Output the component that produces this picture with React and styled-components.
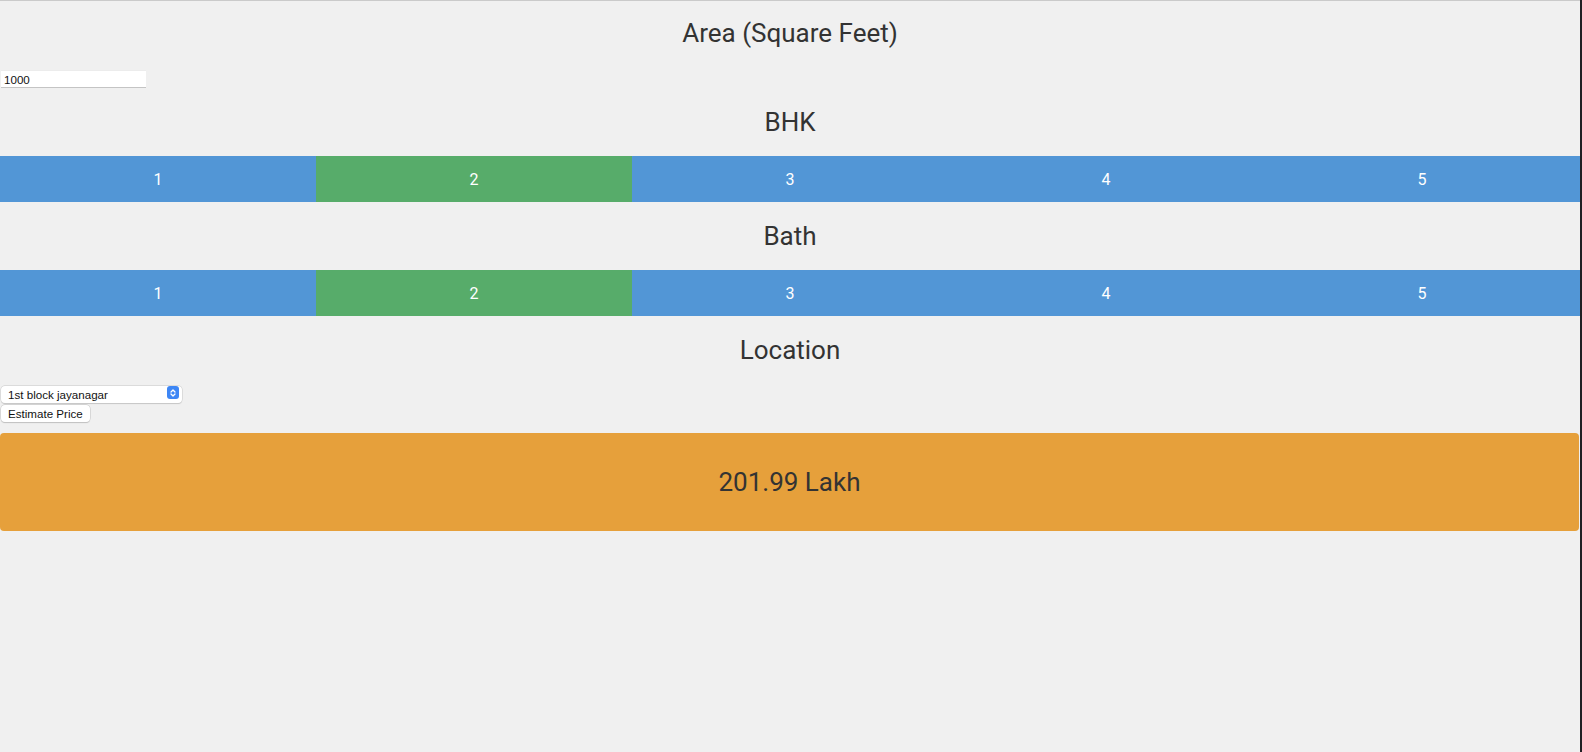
import React, { useState } from "react";
import styled, { createGlobalStyle } from "styled-components";

const Global = createGlobalStyle`
  html, body { margin: 0; padding: 0; background: #f0f0f0; }
  body { font-family: Roboto, "Liberation Sans", sans-serif; color: #333; }
`;

const Frame = styled.div`
  display: flex;
  width: 1582px;
  min-height: 752px;
  background: #1f1f23;
`;

const Page = styled.div`
  flex: 0 0 1580px;
  background: #f0f0f0;
  border-top: 1px solid #cacaca;
  box-sizing: border-box;
  min-height: 752px;
`;

const Heading = styled.h2`
  margin: ${(p) => (p.$first ? "17px 0 22px" : "19px 0")};
  font-family: Roboto, sans-serif;
  font-weight: 400;
  font-size: 26px;
  line-height: 30px;
  text-align: center;
  color: #333;
`;

const AreaInput = styled.input`
  display: block;
  margin: 1px 0 0 1px;
  width: 145px;
  height: 18px;
  box-sizing: border-box;
  padding: 0 3px;
  border: none;
  border-top: 1px solid #ececec;
  border-bottom: 1px solid #c4c4c4;
  background: #fff;
  font-family: "Liberation Sans", Arial, sans-serif;
  font-size: 11.6px;
  color: #111;
  outline: none;
`;

const Row = styled.div`
  display: flex;
  height: 46px;
`;

const Choice = styled.button`
  flex: 1 1 0;
  border: none;
  margin: 0;
  padding: 0;
  background: ${(p) => (p.$active ? "#57ac6a" : "#5296d6")};
  color: #fff;
  font-family: Roboto, sans-serif;
  font-size: 16px;
  cursor: pointer;
`;

const SelectWrap = styled.div`
  position: relative;
  width: 181px;
  height: 17px;
  margin: 3px 0 0 1px;
`;

const Select = styled.select`
  appearance: none;
  -webkit-appearance: none;
  width: 100%;
  height: 17px;
  box-sizing: border-box;
  border: none;
  border-radius: 4px;
  background: #fff;
  box-shadow: 0 0 0 0.5px #c9c9c9, 0 0.5px 1px rgba(0,0,0,0.18);
  padding: 0 20px 0 7px;
  font-family: "Liberation Sans", Arial, sans-serif;
  font-size: 11.6px;
  color: #111;
  outline: none;
`;

const Stepper = styled.span`
  position: absolute;
  right: 3px;
  top: 2px;
  width: 12px;
  height: 13px;
  border-radius: 3px;
  background: #3d86f5;
  display: flex;
  align-items: center;
  justify-content: center;
  pointer-events: none;
`;

const EstimateButton = styled.button`
  display: block;
  margin: 4px 0 0 1px;
  height: 17px;
  padding: 0 7px;
  border: none;
  border-radius: 4px;
  background: #fff;
  box-shadow: 0 0 0 0.5px #c4c4c4, 0 0.5px 1px rgba(0,0,0,0.2);
  font-family: "Liberation Sans", Arial, sans-serif;
  font-size: 11.6px;
  color: #111;
  line-height: 17px;
`;

const Result = styled.div`
  margin: 11px 1px 0 0;
  height: 98px;
  border-radius: 4px;
  background: #e6a03b;
  display: flex;
  align-items: center;
  justify-content: center;
  font-family: Roboto, sans-serif;
  font-size: 26px;
  color: #333;
`;

const options = [1, 2, 3, 4, 5];

function Choices({ value, onChange }) {
  return (
    <Row>
      {options.map((n) => (
        <Choice key={n} $active={n === value} onClick={() => onChange(n)}>
          {n}
        </Choice>
      ))}
    </Row>
  );
}

export default function App() {
  const [bhk, setBhk] = useState(2);
  const [bath, setBath] = useState(2);
  return (
    <Frame>
      <Global />
      <Page>
        <Heading $first>Area (Square Feet)</Heading>
        <AreaInput defaultValue="1000" />
        <Heading>BHK</Heading>
        <Choices value={bhk} onChange={setBhk} />
        <Heading>Bath</Heading>
        <Choices value={bath} onChange={setBath} />
        <Heading>Location</Heading>
        <SelectWrap>
          <Select defaultValue="1st block jayanagar">
            <option>1st block jayanagar</option>
            <option>1st phase jp nagar</option>
            <option>2nd phase judicial layout</option>
          </Select>
          <Stepper>
            <svg width="8" height="10" viewBox="0 0 8 10" fill="none" stroke="#fff" strokeWidth="1.3" strokeLinecap="round" strokeLinejoin="round">
              <path d="M2 4 L4 2 L6 4" />
              <path d="M2 6 L4 8 L6 6" />
            </svg>
          </Stepper>
        </SelectWrap>
        <EstimateButton>Estimate Price</EstimateButton>
        <Result>201.99 Lakh</Result>
      </Page>
    </Frame>
  );
}
